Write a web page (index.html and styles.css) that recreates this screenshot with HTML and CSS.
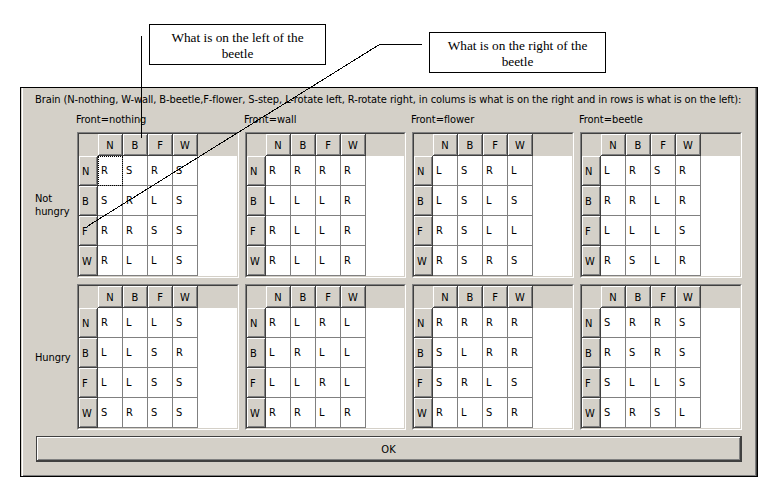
FILE: index.html
```html
<!DOCTYPE html>
<html lang="en">
<head>
<meta charset="utf-8">
<title>Brain</title>
<link rel="stylesheet" href="styles.css">
</head>
<body>
<main class="dialog">
  <h1 class="title"><span>Brain (N-nothing, W-wall, B-beetle,F-flower, S-step, L-rotate left, R-rotate right, in colums is what is on the right and in rows is what is on the left):</span></h1>
  <div class="grid" id="grid"></div>
  <button class="ok">OK</button>
</main>
<div class="callout callout-left">What is on the left of the<br>beetle</div>
<div class="callout callout-right">What is on the right of the<br>beetle</div>
<svg class="leaders" width="776" height="500" viewBox="0 0 776 500">
  <path d="M141.5 36V138"/>
  <path d="M422 44.5H379.5L87 226.5"/>
</svg>
<script src="script.js"></script>
</body>
</html>
```
FILE: styles.css
```css
* { box-sizing: border-box; }
body {
  margin: 0;
  width: 776px;
  height: 500px;
  overflow: hidden;
  position: relative;
  background: #fff;
  color: #000;
  font: 11px/13px "DejaVu Sans Condensed", "DejaVu Sans", sans-serif;
}
.dialog {
  width: 738px;
  height: 390px;
  margin: 87px 0 0 20px;
  padding: 5px 13px 0 14px;
  border: 1px solid #000;
  box-shadow: inset 1px 0 #d4d0c8, inset 2px 0 #fff, inset -1px 0 #404040, inset -2px -1px #808080;
  background: #d4d0c8;
}
.title {
  margin: 0 0 8px;
  font: inherit;
  white-space: nowrap;
  letter-spacing: -.095px;
}
.grid {
  display: grid;
  grid-template-columns: 36px 162px 161px 162px 162px;
  grid-template-rows: 12px 146px 146px;
  column-gap: 6px;
  row-gap: 6px;
}
.front { margin-left: -1px; line-height: 12px; letter-spacing: -.05px; }
.label { align-self: center; letter-spacing: -.1px; }
.table {
  border: 1px solid #808080;
  border-right-color: #fff;
  border-bottom-color: #fff;
  background: #fff;
}
.inner {
  height: 144px;
  border: 1px solid #404040;
  border-right-color: #d4d0c8;
  border-bottom-color: #d4d0c8;
  background: linear-gradient(#d4d0c8 22px, #fff 22px);
  display: grid;
  grid-template-columns: 19px repeat(4, 25px);
  grid-template-rows: 22px repeat(4, 30px);
}
.head {
  border-right: 1px solid #404040;
  border-bottom: 1px solid #404040;
  background: #d4d0c8;
  box-shadow: inset 1px 1px #fff, inset -1px -1px #808080;
  text-align: center;
  line-height: 23px;
}
.row-head { padding-left: 3px; text-align: left; line-height: 32px; }
.cell {
  border-right: 1px solid #808080;
  border-bottom: 1px solid #808080;
  padding-left: 3px;
  line-height: 30px;
}
.focus { outline: 1px dotted #000; outline-offset: -1px; }
.ok {
  display: block;
  width: 706px;
  height: 26px;
  margin: 6px 0 0 1px;
  padding: 2px 0 0;
  border: 1px solid #404040;
  border-bottom-width: 2px;
  border-right-width: 2px;
  box-shadow: inset 1px 1px #fff, inset -1px -1px #808080;
  background: #d4d0c8;
  color: #000;
  font: inherit;
}
.callout {
  position: absolute;
  width: 177px;
  height: 41px;
  padding-top: 5px;
  border: 1px solid #000;
  background: #fff;
  font: 13.3px/16px "Liberation Serif", serif;
  text-align: center;
}
.callout-left { left: 149px; top: 24px; }
.callout-right { left: 429px; top: 32px; }
.leaders {
  position: absolute;
  left: 0;
  top: 0;
  fill: none;
  stroke: #000;
  stroke-width: 1;
  shape-rendering: crispEdges;
}
```
FILE: script.js
```js
const names = ["N", "B", "F", "W"];
const groups = [
  { label: "Not<br>hungry", tables: ["RSRS SRLS RRSS RLLS", "RRRR LLLR RLLR RLLR", "LSRL LSLS RSLL RSRS", "LRSR RRLR LLLS RSLR"] },
  { label: "Hungry", tables: ["RLLS LLSR LLSS SRSS", "RLRL LRLL LLRL RRLR", "RRRR SLRR SRLS RLSR", "SRRS RSRS SLLS SRSL"] }
];
const grid = document.getElementById("grid");
let html = "<div></div>" + ["nothing", "wall", "flower", "beetle"].map(f => `<div class="front">Front=${f}</div>`).join("");
groups.forEach((g, gi) => {
  html += `<div class="label">${g.label}</div>`;
  g.tables.forEach((t, ti) => {
    html += '<div class="table"><div class="inner"><span></span>';
    html += names.map(n => `<div class="head">${n}</div>`).join("");
    t.split(" ").forEach((row, ri) => {
      html += `<div class="head row-head">${names[ri]}</div>`;
      html += [...row].map((v, ci) => `<div class="cell${gi + ti + ri + ci === 0 ? " focus" : ""}">${v}</div>`).join("");
    });
    html += "</div></div>";
  });
});
grid.innerHTML = html;
```
